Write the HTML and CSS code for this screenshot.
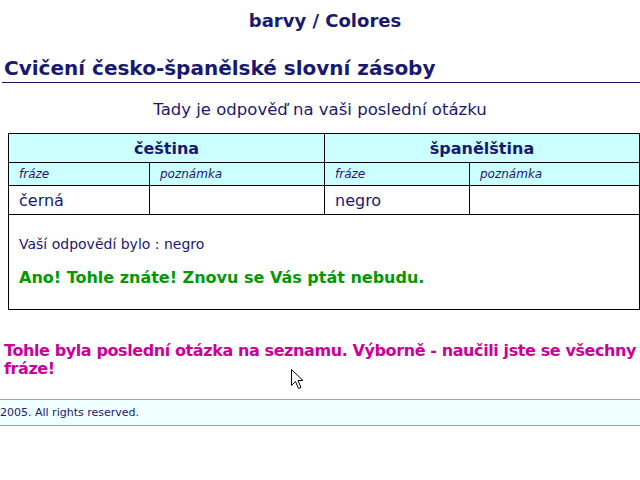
FILE: index.html
```html
<!DOCTYPE html>
<html>
<head>
  <title>barvy / Colores</title>
  <link rel="stylesheet" href="styles.css">
</head>
<body>
  <div class="topic">barvy / Colores</div>

  <h1>Cvičení česko-španělské slovní zásoby</h1>

  <p class="intro">Tady je odpověď na vaši poslední otázku</p>

  <table class="words">
    <tr class="lang">
      <th colspan="2">čeština</th>
      <th colspan="2">španělština</th>
    </tr>
    <tr class="sub">
      <td class="c1">fráze</td>
      <td class="c2">poznámka</td>
      <td class="c3">fráze</td>
      <td>poznámka</td>
    </tr>
    <tr class="entry">
      <td>černá</td>
      <td></td>
      <td>negro</td>
      <td></td>
    </tr>
    <tr class="result">
      <td colspan="4">
        <div class="answer">Vaší odpovědí bylo : negro</div>
        <div class="correct">Ano! Tohle znáte! Znovu se Vás ptát nebudu.</div>
      </td>
    </tr>
  </table>

  <p class="done">Tohle byla poslední otázka na seznamu. Výborně - naučili jste se všechny fráze!</p>

  <div class="footer">2005. All rights reserved.</div>

  <svg class="cursor" width="13" height="21" viewBox="0 0 13 21">
    <path d="M0.5 0.5 L0.5 16.5 L4.5 12.5 L7.5 19.5 L10 18.5 L7 11.5 L12 11.5 Z" fill="#fff" stroke="#000" stroke-width="1"/>
  </svg>
</body>
</html>
```

FILE: styles.css
```css
body {
  margin: 0;
  font-family: "DejaVu Sans", sans-serif;
  color: #191970;
  background: white;
  position: relative;
}
.topic {
  text-align: center;
  font-size: 18px;
  font-weight: bold;
  padding-top: 10px;
  padding-left: 10px;
  height: 22px;
}
h1 {
  font-size: 20px;
  margin: 24px 0 0 2px;
  padding: 0 0 2px 2px;
  border-bottom: 1px solid #191970;
  line-height: 24px;
}
.intro {
  text-align: center;
  font-size: 16.5px;
  margin: 17px 0 0 0;
  line-height: 20px;
}
.words {
  margin: 13px 0 0 8px;
  width: 632px;
  border-collapse: collapse;
  border: 1px solid #000;
}
.words td, .words th {
  border: 1px solid #000;
  padding: 0 10px;
  text-align: left;
}
.lang th {
  background: #ccffff;
  text-align: center;
  font-size: 16px;
  height: 28px;
}
.sub td {
  background: #ccffff;
  font-style: italic;
  font-size: 12px;
  height: 22px;
}
.c1 { width: 120px; }
.c2 { width: 154px; }
.c3 { width: 124px; }
.entry td {
  font-size: 16px;
  height: 28px;
}
.result td {
  height: 94px;
  vertical-align: top;
}
.answer {
  font-size: 14px;
  margin-top: 21px;
}
.correct {
  font-size: 16px;
  font-weight: bold;
  color: #009900;
  margin-top: 16px;
}
.done {
  color: #cc0099;
  font-size: 16px;
  font-weight: bold;
  letter-spacing: -0.4px;
  line-height: 18px;
  margin: 32px 0 0 4px;
}
.footer {
  margin-top: 21px;
  background: #f0ffff;
  border-top: 1px solid #9999ee;
  border-bottom: 1px solid #9999ee;
  font-size: 11px;
  height: 25px;
  line-height: 25px;
}
.cursor {
  position: absolute;
  left: 291px;
  top: 369px;
}
```
